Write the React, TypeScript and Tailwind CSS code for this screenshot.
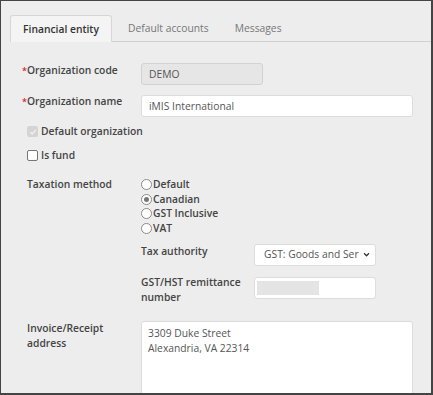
import React from 'react';

const Label = ({ children, required }: { children: React.ReactNode; required?: boolean }) => (
  <div className="flex w-[119px] shrink-0 font-semibold text-[#444]">
    <span className={`w-[5px] text-[9px] text-[#d9262f] ${required ? '' : 'invisible'}`}>*</span>
    <span>{children}</span>
  </div>
);

const Radio = ({ label, checked }: { label: string; checked?: boolean }) => (
  <div className="flex h-[14.7px] items-center">
    <span className="mr-[1px] flex h-[11px] w-[11px] items-center justify-center rounded-full border border-[#8a8a8a] bg-white">
      {checked && <span className="h-[5px] w-[5px] rounded-full bg-[#777]" />}
    </span>
    <span className="font-semibold text-[#444]">{label}</span>
  </div>
);

export default function App() {
  return (
    <div
      className="h-[395px] w-[433px] overflow-hidden border-t border-l border-r-2 border-b-2 border-[#444] bg-[#ededed] text-[10.3px] leading-[15px]"
      style={{ fontFamily: '"Open Sans", "Liberation Sans", sans-serif' }}
    >
      {/* tabs */}
      <div className="ml-[9px] mt-[14px] flex border-b border-[#d0d0d0]">
        <div className="-mb-px flex h-[27px] w-[102px] items-center justify-center rounded-t-[3px] border border-b-0 border-[#d6d6d6] bg-[#f4f4f4] font-semibold text-[#333]">
          Financial entity
        </div>
        <div className="flex h-[26px] items-center pl-[16px] pr-[16px] text-[#777]">Default accounts</div>
        <div className="flex h-[26px] items-center pl-[10px] text-[#777]">Messages</div>
      </div>

      <div className="pl-[21px]">
        {/* organization code */}
        <div className="mt-[21px] flex items-start">
          <Label required>Organization code</Label>
          <div className="flex h-[22px] w-[122px] items-center rounded-[3px] border border-[#d2d2d2] bg-[#e6e6e6] px-[7px] text-[#555]">
            DEMO
          </div>
        </div>

        {/* organization name */}
        <div className="mt-[9px] flex items-start">
          <Label required>Organization name</Label>
          <div className="mt-[1px] flex h-[22px] w-[272px] items-center rounded-[3px] border border-[#dcdcdc] bg-white px-[7px] text-[#555]">
            iMIS International
          </div>
        </div>

        {/* default organization */}
        <div className="ml-[5px] mt-[7px] flex h-[15px] items-center">
          <span className="mr-[3px] flex h-[11px] w-[11px] items-center justify-center rounded-[2px] bg-[#d4d4d4]">
            <svg viewBox="0 0 10 10" className="h-[8px] w-[8px]" fill="none" stroke="#eeeeee" strokeWidth="1.8">
              <path d="M1.5 5.2 L4 7.5 L8.5 2.5" />
            </svg>
          </span>
          <span className="font-semibold text-[#444]">Default organization</span>
        </div>

        {/* is fund */}
        <div className="ml-[5px] mt-[9px] flex h-[15px] items-center">
          <span className="mr-[3px] h-[11px] w-[11px] rounded-[2px] border border-[#767676] bg-white" />
          <span className="font-semibold text-[#444]">Is fund</span>
        </div>

        {/* taxation method */}
        <div className="mt-[14px] flex items-start">
          <div className="ml-[5px] w-[114px] shrink-0 font-semibold text-[#444]">Taxation method</div>
          <div className="flex flex-col">
            <Radio label="Default" />
            <Radio label="Canadian" checked />
            <Radio label="GST Inclusive" />
            <Radio label="VAT" />
          </div>
        </div>

        {/* tax authority */}
        <div className="mt-[8px] flex items-start pl-[119px]">
          <div className="w-[113px] shrink-0 font-semibold text-[#444]">Tax authority</div>
          <div className="flex h-[22px] w-[122px] items-center justify-between rounded-[3px] border border-[#dcdcdc] bg-white pl-[9px] pr-[5px] text-[#555]">
            <span className="overflow-hidden whitespace-nowrap">GST: Goods and Ser</span>
            <svg viewBox="0 0 10 10" className="h-[7px] w-[7px] shrink-0" fill="none" stroke="#333" strokeWidth="1.8">
              <path d="M1.5 3.2 L5 6.8 L8.5 3.2" />
            </svg>
          </div>
        </div>

        {/* gst/hst */}
        <div className="mt-[9px] flex items-start pl-[119px]">
          <div className="w-[113px] shrink-0 font-semibold text-[#444]">
            GST/HST remittance
            <br />
            number
          </div>
          <div className="mt-[2px] flex h-[22px] w-[122px] items-center rounded-[3px] border border-[#dcdcdc] bg-white pl-[2px]">
            <div className="h-[14px] w-[62px] bg-[#e4e4e4]" />
          </div>
        </div>

        {/* invoice address */}
        <div className="mt-[16px] flex items-start">
          <div className="ml-[5px] w-[114px] shrink-0 font-semibold text-[#444]">
            Invoice/Receipt
            <br />
            address
          </div>
          <div className="h-[100px] w-[272px] rounded-[3px] border border-[#dcdcdc] bg-white px-[6px] pt-[4px] text-[#555]">
            3309 Duke Street
            <br />
            Alexandria, VA 22314
          </div>
        </div>
      </div>
    </div>
  );
}
